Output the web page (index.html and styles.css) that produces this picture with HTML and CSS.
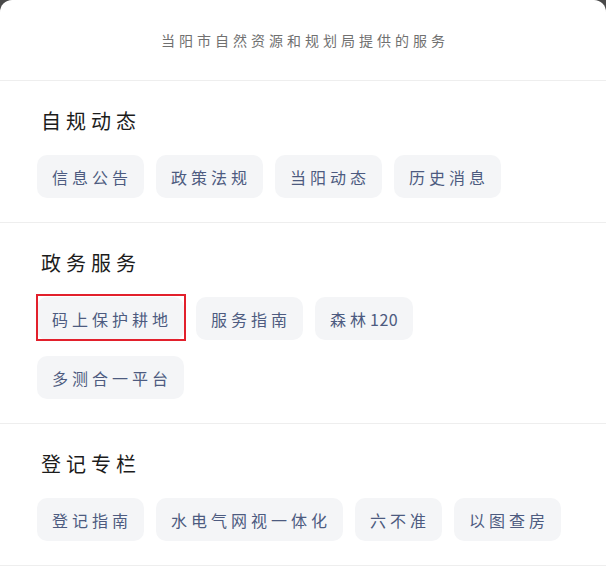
FILE: index.html
```html
<!DOCTYPE html>
<html lang="zh-CN">
<head>
<meta charset="utf-8">
<title>服务</title>
<link rel="stylesheet" href="styles.css">
</head>
<body>
<div class="sheet">
  <header class="intro">当阳市自然资源和规划局提供的服务</header>

  <section class="group">
    <h2 class="group-title">自规动态</h2>
    <div class="chips">
      <span class="chip">信息公告</span>
      <span class="chip">政策法规</span>
      <span class="chip">当阳动态</span>
      <span class="chip">历史消息</span>
    </div>
  </section>

  <section class="group">
    <h2 class="group-title">政务服务</h2>
    <div class="chips">
      <span class="chip chip-marked">码上保护耕地</span>
      <span class="chip">服务指南</span>
      <span class="chip">森林<span class="digits">120</span></span>
      <span class="chip">多测合一平台</span>
    </div>
  </section>

  <section class="group">
    <h2 class="group-title">登记专栏</h2>
    <div class="chips">
      <span class="chip">登记指南</span>
      <span class="chip">水电气网视一体化</span>
      <span class="chip">六不准</span>
      <span class="chip">以图查房</span>
    </div>
  </section>
</div>
</body>
</html>
```

FILE: styles.css
```css
* { box-sizing: border-box; }

html, body {
  margin: 0;
  padding: 0;
  background: #4a4a4a;
}

body {
  font-family: "Noto Sans CJK SC", "Noto Sans", sans-serif;
  width: 606px;
  height: 567px;
  overflow: hidden;
}

.sheet {
  background: #ffffff;
  border-radius: 12px 12px 0 0;
  min-height: 567px;
}

.intro {
  height: 81px;
  display: flex;
  align-items: center;
  justify-content: center;
  padding-left: 4px;
  font-size: 14px;
  letter-spacing: 4px;
  color: #707070;
  border-bottom: 1px solid #eeeeee;
}

.group {
  padding: 26px 40px 24px 37px;
  border-bottom: 1px solid #eeeeee;
}

.group-title {
  margin: 0 0 20px 4px;
  font-size: 20px;
  line-height: 28px;
  font-weight: 400;
  letter-spacing: 5px;
  color: #1c1c1c;
}

.chips {
  display: flex;
  flex-wrap: wrap;
  gap: 16px 12px;
}

.chip {
  position: relative;
  height: 43px;
  display: inline-flex;
  align-items: center;
  padding: 0 12px 0 15px;
  font-size: 16px;
  letter-spacing: 4px;
  color: #4d5b80;
  background: #f4f5f7;
  border-radius: 10px;
}

.digits {
  letter-spacing: 0.5px;
  padding-right: 3px;
}

.chip-marked::after {
  content: "";
  position: absolute;
  inset: -3px -2px -1px -1px;
  border: 2px solid #e2202c;
}
```
